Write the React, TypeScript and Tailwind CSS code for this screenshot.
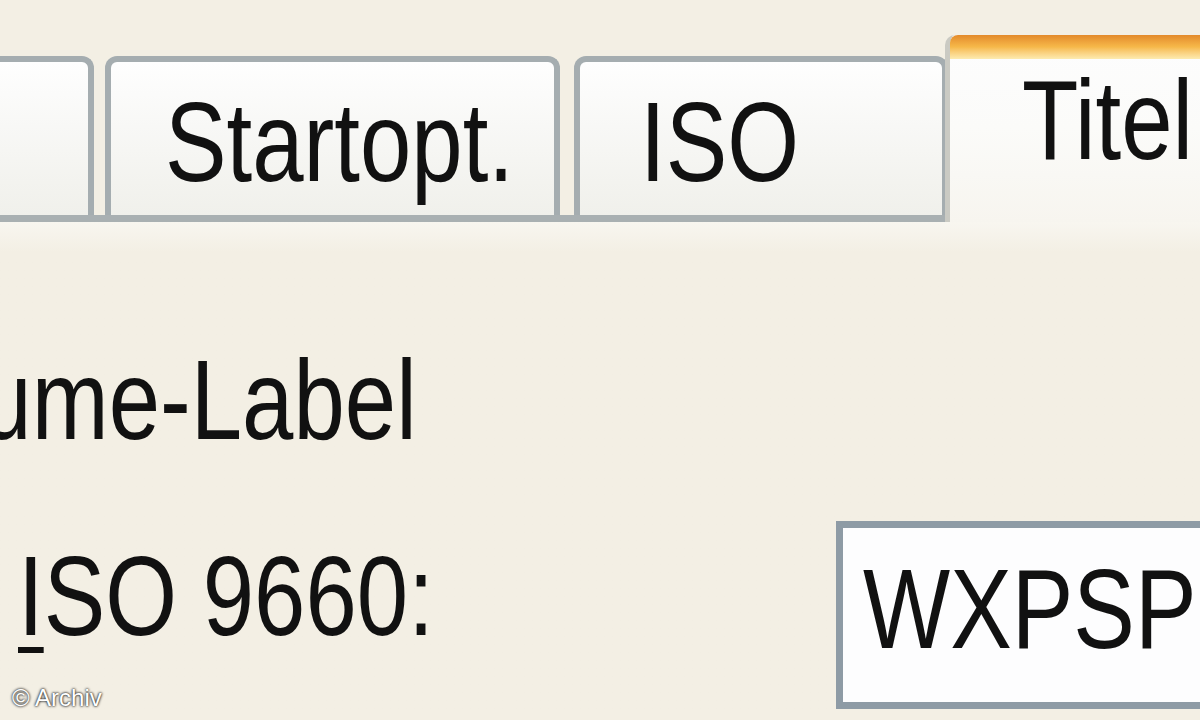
import React from "react";

const font = "font-['Liberation_Sans',Arial,sans-serif]";
// Tahoma-like narrow glyphs: squeeze the Arial-width face horizontally
const narrow = "inline-block origin-left scale-x-[0.81] whitespace-nowrap text-[114px] leading-none text-[#111]";

type TabProps = {
  label?: string;
  width: string;
  pad: string;
  className?: string;
};

const Tab: React.FC<TabProps> = ({ label, width, pad, className = "" }) => (
  <div
    className={`${width} ${className} h-[159px] shrink-0 rounded-t-[12px] border-[6px] border-b-0 border-[#a5adb0] bg-gradient-to-b from-[#fefefe] to-[#f0f0eb] ${pad} pt-[23px]`}
  >
    {label && <span className={narrow}>{label}</span>}
  </div>
);

export default function App() {
  return (
    <div className={`relative w-[1200px] h-[720px] overflow-hidden bg-[#f3efe4] ${font}`}>
      {/* tab strip */}
      <div className="flex items-end pt-[35px] border-b-[7px] border-[#a9b0b2]">
        <Tab width="w-[140px]" pad="" className="ml-[-46px]" />
        <Tab width="w-[455px]" pad="pl-[54px]" label="Startopt." className="ml-[11px]" />
        <Tab width="w-[374px]" pad="pl-[60px]" label="ISO" className="ml-[14px]" />
        <div className="relative z-10 ml-[-3px] mb-[-7px] w-[420px] h-[187px] shrink-0 rounded-tl-[10px] bg-gradient-to-b from-[#fdfdfe] via-[#fbfbf9] to-[#f7f5ef] border-l-[5px] border-[#cacac3]">
          <div className="h-[24px] rounded-tl-[8px] bg-gradient-to-b from-[#e38a2a] via-[#f6b94a] to-[#fdebb0]" />
          <div className="pl-[72px] pt-[4px]">
            <span className={narrow}>Titel</span>
          </div>
        </div>
      </div>

      {/* tab page */}
      <div className="bg-gradient-to-b from-[#f8f6f0] to-[#f3efe4] to-[30px]">
        <div className="pt-[121px] ml-[-148px]">
          <span className={narrow}>Volume-Label</span>
        </div>

        <div className="flex items-start mt-[64px] pl-[18px]">
          <div className="w-[818px] shrink-0 pt-[18px]">
            <span className={narrow}>
              <span className="underline decoration-[6px] underline-offset-[12px]">I</span>SO 9660:
            </span>
          </div>
          <div className="w-[600px] h-[188px] shrink-0 border-[7px] border-[#8e9ba5] bg-[#fdfdfe] pl-[20px] pt-[24px]">
            <span className={narrow}>WXPSP2</span>
          </div>
        </div>
      </div>

      <span className="absolute left-[12px] bottom-[10px] text-[24px] leading-none text-white [text-shadow:0_0_2px_#222,0_0_3px_#222]">
        © Archiv
      </span>
    </div>
  );
}
